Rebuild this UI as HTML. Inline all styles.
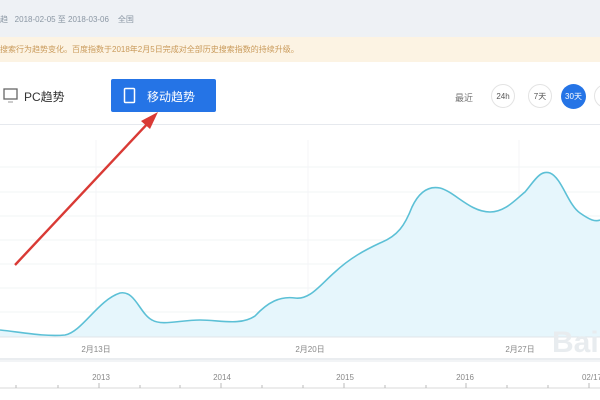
<!DOCTYPE html>
<html><head><meta charset="utf-8"><style>
body{margin:0;width:600px;height:400px;overflow:hidden;background:#fff;font-family:"Liberation Sans","Noto Sans CJK SC",sans-serif;position:relative}
.a{position:absolute}
</style></head><body>
<div class="a" style="left:0;top:0;width:600px;height:37px;background:#eef1f5"></div>
<div class="a" style="left:0;top:14px;font-size:8px;color:#8a96a3;white-space:nowrap">趋&nbsp;&nbsp;&nbsp;2018-02-05 至 2018-03-06&nbsp;&nbsp;&nbsp;&nbsp;全国</div>
<div class="a" style="left:0;top:37px;width:600px;height:25px;background:#fcf3e3"></div>
<div class="a" style="left:0;top:44px;font-size:8px;color:#c99a5a;white-space:nowrap">搜索行为趋势变化。百度指数于2018年2月5日完成对全部历史搜索指数的持续升级。</div>
<div class="a" style="left:0;top:124px;width:600px;height:1px;background:#e6e9ee"></div>
<svg class="a" style="left:3px;top:88px" width="16" height="16"><rect x="1" y="1" width="13" height="10" fill="none" stroke="#666" stroke-width="1.3"/><line x1="5" y1="14" x2="10" y2="14" stroke="#999"/></svg>
<div class="a" style="left:24px;top:88px;font-size:12px;color:#333">PC趋势</div>
<div class="a" style="left:111px;top:79px;width:105px;height:33px;background:#2574e6;border-radius:2px"></div>
<svg class="a" style="left:123px;top:87px" width="14" height="18"><rect x="1.5" y="1.5" width="10" height="14" rx="1" fill="none" stroke="#fff" stroke-width="1.5"/></svg>
<div class="a" style="left:147px;top:88px;font-size:12px;color:#fff">移动趋势</div>
<div class="a" style="left:455px;top:91px;font-size:9px;color:#777">最近</div>
<div class="a" style="left:491px;top:84px;width:24px;height:24px;border:1px solid #e3e3e3;border-radius:50%;font-size:8px;line-height:24px;text-align:center;color:#555;box-sizing:border-box">24h</div>
<div class="a" style="left:528px;top:84px;width:24px;height:24px;border:1px solid #e3e3e3;border-radius:50%;font-size:8px;line-height:24px;text-align:center;color:#555;box-sizing:border-box">7天</div>
<div class="a" style="left:561px;top:84px;width:25px;height:25px;background:#2574e6;border-radius:50%;font-size:8px;line-height:25px;text-align:center;color:#fff">30天</div>
<div class="a" style="left:594px;top:84px;width:24px;height:24px;border:1px solid #e3e3e3;border-radius:50%;box-sizing:border-box"></div>
<svg class="a" style="left:0;top:0" width="600" height="400">
<g stroke="#f2f4f6" stroke-width="1">
<line x1="0" y1="167" x2="600" y2="167"/><line x1="0" y1="192" x2="600" y2="192"/><line x1="0" y1="216" x2="600" y2="216"/><line x1="0" y1="240" x2="600" y2="240"/><line x1="0" y1="264" x2="600" y2="264"/><line x1="0" y1="288" x2="600" y2="288"/><line x1="0" y1="312" x2="600" y2="312"/>
</g>
<g stroke="#f4f5f7" stroke-width="1">
<line x1="96" y1="140" x2="96" y2="337"/><line x1="308" y1="140" x2="308" y2="337"/><line x1="519" y1="140" x2="519" y2="337"/>
</g>
<path d="M0,330 C20,332 45,337 65,335 C82,332 98,300 120,293 C135,290 140,314 152,320 C162,326 180,320 200,320 C220,320 240,326 255,316 C268,302 280,296 295,298 C310,300 320,285 335,272 C350,258 365,250 380,243 C398,236 405,225 412,207 C420,190 430,186 440,188 C455,192 470,212 490,212 C505,212 515,200 525,192 C535,180 540,170 550,173 C562,178 568,205 580,213 C590,220 595,222 600,220 L600,337 L0,337 Z" fill="#e6f6fc"/>
<path d="M0,330 C20,332 45,337 65,335 C82,332 98,300 120,293 C135,290 140,314 152,320 C162,326 180,320 200,320 C220,320 240,326 255,316 C268,302 280,296 295,298 C310,300 320,285 335,272 C350,258 365,250 380,243 C398,236 405,225 412,207 C420,190 430,186 440,188 C455,192 470,212 490,212 C505,212 515,200 525,192 C535,180 540,170 550,173 C562,178 568,205 580,213 C590,220 595,222 600,220" fill="none" stroke="#5cc0d6" stroke-width="1.6"/>
<line x1="0" y1="337" x2="600" y2="337" stroke="#e0e4e8"/>
<line x1="0" y1="359" x2="600" y2="359" stroke="#d6dbe0"/><line x1="0" y1="361" x2="600" y2="361" stroke="#e4e8ec"/>
<line x1="0" y1="388" x2="600" y2="388" stroke="#d8d8d8"/>
<g stroke="#bbb"><line x1="16" y1="385" x2="16" y2="388"/><line x1="58" y1="385" x2="58" y2="388"/><line x1="99" y1="383" x2="99" y2="388"/><line x1="140" y1="385" x2="140" y2="388"/><line x1="180" y1="385" x2="180" y2="388"/><line x1="221" y1="383" x2="221" y2="388"/><line x1="262" y1="385" x2="262" y2="388"/><line x1="303" y1="385" x2="303" y2="388"/><line x1="344" y1="383" x2="344" y2="388"/><line x1="385" y1="385" x2="385" y2="388"/><line x1="426" y1="385" x2="426" y2="388"/><line x1="466" y1="383" x2="466" y2="388"/><line x1="507" y1="385" x2="507" y2="388"/><line x1="548" y1="385" x2="548" y2="388"/><line x1="589" y1="383" x2="589" y2="388"/></g>
<g font-size="8" fill="#888" text-anchor="middle" font-family="Liberation Sans,Noto Sans CJK SC,sans-serif">
<text x="96" y="352">2月13日</text><text x="310" y="352">2月20日</text><text x="520" y="352">2月27日</text>
<text x="101" y="380">2013</text><text x="222" y="380">2014</text><text x="345" y="380">2015</text><text x="465" y="380">2016</text><text x="592" y="380">02/17</text>
</g>
<text x="552" y="352" font-size="30" fill="#e8ecef" font-family="Liberation Sans,sans-serif" font-weight="bold">Bai</text>
<line x1="15" y1="265" x2="150" y2="121" stroke="#d93a35" stroke-width="2.4"/>
<polygon points="158,112 141,121 150,129" fill="#d93a35"/>
</svg>
</body></html>
